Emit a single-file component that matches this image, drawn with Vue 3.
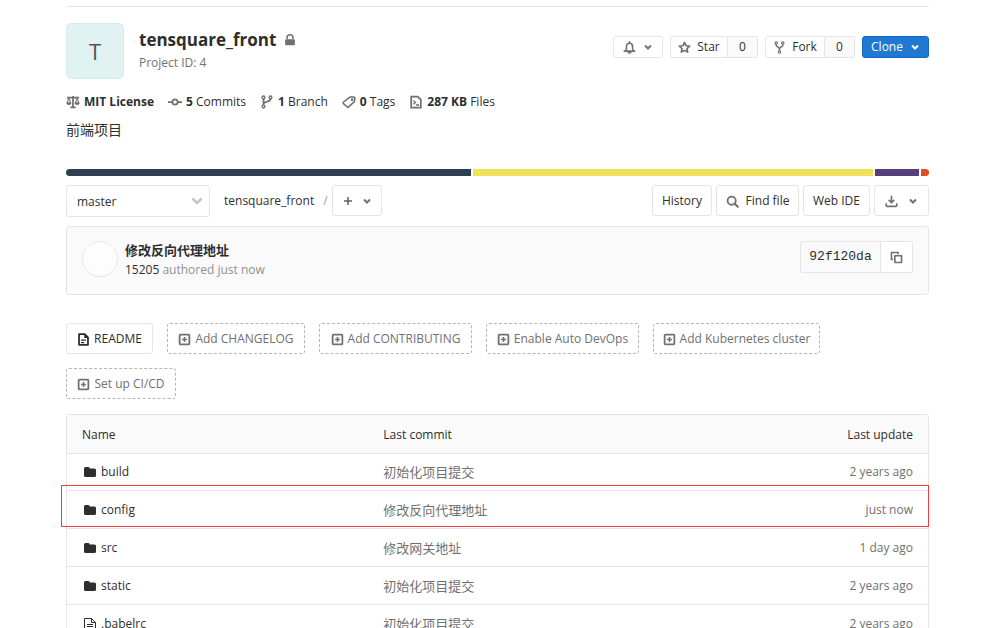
<script setup>
import { ref } from 'vue'

const branch = ref('master')

const stats = [
  { icon: 'scale', value: 'MIT License', label: '' },
  { icon: 'commit', value: '5', label: 'Commits' },
  { icon: 'branch', value: '1', label: 'Branch' },
  { icon: 'tag', value: '0', label: 'Tags' },
  { icon: 'disk', value: '287 KB', label: 'Files' }
]

const languages = [
  { name: 'Vue', share: 405, color: '#2c3e50' },
  { name: 'JavaScript', share: 401, color: '#f1e05a' },
  { name: 'CSS', share: 44, color: '#563d7c' },
  { name: 'HTML', share: 8, color: '#e34c26' }
]

const shortcuts = [
  { label: 'README', exists: true, size: 'w-readme' },
  { label: 'Add CHANGELOG', size: 'w-changelog' },
  { label: 'Add CONTRIBUTING', size: 'w-contributing' },
  { label: 'Enable Auto DevOps', size: 'w-contributing' },
  { label: 'Add Kubernetes cluster', size: 'w-cluster' },
  { label: 'Set up CI/CD', size: 'w-ci' }
]

const files = [
  { name: 'build', folder: true, commit: '初始化项目提交', updated: '2 years ago' },
  { name: 'config', folder: true, commit: '修改反向代理地址', updated: 'just now', marked: true },
  { name: 'src', folder: true, commit: '修改网关地址', updated: '1 day ago' },
  { name: 'static', folder: true, commit: '初始化项目提交', updated: '2 years ago' },
  { name: '.babelrc', folder: false, commit: '初始化项目提交', updated: '2 years ago' }
]
</script>

<template>
  <main class="page">
    <header class="project">
      <div class="avatar">T</div>
      <div class="heading">
        <h1>
          tensquare_front
          <svg class="lock" viewBox="0 0 16 16" aria-hidden="true">
            <path d="M4 7V5a4 4 0 0 1 8 0v2" fill="none" stroke="currentColor" stroke-width="2" />
            <rect x="1.5" y="7" width="13" height="8" rx="1.5" fill="currentColor" />
          </svg>
        </h1>
        <p>Project ID: 4</p>
      </div>
      <div class="actions">
        <button class="btn small bell" type="button" aria-label="Notification setting">
          <svg class="icon" viewBox="0 0 16 16"><path d="M1.500 12.500h13M3.500 12c.8-1.500.8-3 .8-5.500a3.700 3.700 0 0 1 7.400 0c0 2.500 0 4 .8 5.500M6.500 14.500h3M8 1v1.500" fill="none" stroke="currentColor" stroke-width="2" stroke-linecap="round" /></svg>
          <svg class="chevron" viewBox="0 0 10 10"><path d="M2 3.500l3 3 3-3" /></svg>
        </button>
        <div class="group">
          <button class="btn small star" type="button">
            <svg class="icon" viewBox="0 0 16 16"><path d="M8 1.800l1.900 4 4.400.5-3.200 3 .8 4.400L8 11.500l-3.900 2.200.8-4.400-3.200-3 4.400-.5z" fill="none" stroke="currentColor" stroke-width="2" stroke-linejoin="round" /></svg>
            Star
          </button>
          <a class="btn small count" href="#">0</a>
        </div>
        <div class="group">
          <button class="btn small fork" type="button">
            <svg class="icon" viewBox="0 0 16 16"><g fill="none" stroke="currentColor" stroke-width="1.500"><circle cx="4" cy="2.500" r="1.500" /><circle cx="12" cy="2.500" r="1.500" /><circle cx="8" cy="13.500" r="1.500" /><path d="M4 4v1.500c0 1.500 4 2 4 4V12M12 4v1.500c0 1.500-4 2-4 4" stroke-width="2" /></g></svg>
            Fork
          </button>
          <a class="btn small count" href="#">0</a>
        </div>
        <button class="btn small clone" type="button">
          Clone
          <svg class="chevron" viewBox="0 0 10 10"><path d="M2 3.500l3 3 3-3" /></svg>
        </button>
      </div>
    </header>

    <nav class="stats" aria-label="Project statistics">
      <a v-for="s in stats" :key="s.icon" href="#">
        <svg class="icon" viewBox="0 0 16 16" aria-hidden="true">
          <g fill="none" stroke="currentColor" stroke-width="1.600">
            <template v-if="s.icon === 'scale'">
              <path d="M8 1v13M5 14h6M1 3h14" stroke-width="2" />
              <path d="M3.300 3.500L1.300 9h4zM12.700 3.500l-2 5.500h4z" stroke-width="1.200" />
              <path d="M.5 9h5.600a2.800 2.300 0 0 1-5.600 0zM9.900 9h5.600a2.800 2.300 0 0 1-5.600 0z" fill="currentColor" stroke="none" />
            </template>
            <template v-else-if="s.icon === 'commit'">
              <circle cx="8" cy="8" r="3" stroke-width="2" />
              <path d="M0 8h5M11 8h5" stroke-width="2" />
            </template>
            <template v-else-if="s.icon === 'branch'">
              <circle cx="4" cy="2.800" r="1.600" /><circle cx="4" cy="13.200" r="1.600" /><circle cx="12" cy="2.800" r="1.600" />
              <path d="M4 4.500v7M12 4.500c0 4-8 2.500-8 6" stroke-width="2" />
            </template>
            <template v-else-if="s.icon === 'tag'">
              <path d="M9 2.300h4.500a1.200 1.200 0 0 1 1.200 1.200l-.5 4-6.700 6a1.300 1.300 0 0 1-1.900-.1L1.700 9.800a1.300 1.300 0 0 1 .1-1.800z" stroke-width="1.800" stroke-linejoin="round" />
              <circle cx="11.500" cy="5.300" r=".7" />
            </template>
            <template v-else>
              <path d="M2.500 1.800h7.500l3.500 3.500v9h-11z" stroke-width="2" />
              <path d="M5 6.500l2.300 2L5 10.500M8 11.500h3.500" />
            </template>
          </g>
        </svg>
        <strong>{{ s.value }}</strong><span v-if="s.label">&nbsp;{{ s.label }}</span>
      </a>
    </nav>

    <p class="description">前端项目</p>

    <div class="languages" role="img" aria-label="Repository languages">
      <span v-for="l in languages" :key="l.name" :style="{ flexGrow: l.share, background: l.color }"></span>
    </div>

    <div class="toolbar">
      <div class="select">
        <select v-model="branch" aria-label="Switch branch">
          <option>master</option>
        </select>
        <svg class="select-arrow" viewBox="0 0 12 12" aria-hidden="true"><path d="M1.500 3.500L6 8l4.500-4.500" fill="none" stroke="currentColor" stroke-width="2.500" /></svg>
      </div>
      <nav class="breadcrumb" aria-label="Breadcrumb"><a href="#">tensquare_front</a><span>/</span></nav>
      <button class="btn add" type="button" aria-label="Add to tree">
        <svg class="plus" viewBox="0 0 10 10"><path d="M5 1v8M1 5h8" fill="none" stroke="currentColor" stroke-width="1.500" /></svg>
        <svg class="chevron" viewBox="0 0 10 10"><path d="M2 3.500l3 3 3-3" /></svg>
      </button>
      <div class="tools">
        <a class="btn history" href="#">History</a>
        <a class="btn find" href="#">
          <svg class="icon" viewBox="0 0 16 16"><circle cx="7" cy="7" r="5" fill="none" stroke="currentColor" stroke-width="2.200" /><path d="M10.500 10.500l4 4" stroke="currentColor" stroke-width="2.500" stroke-linecap="round" /></svg>
          Find file
        </a>
        <a class="btn ide" href="#">Web IDE</a>
        <button class="btn download" type="button" aria-label="Download">
          <svg class="icon" viewBox="0 0 16 16"><path d="M8 1v8M4.500 6L8 9.500 11.500 6M1.500 10v3a1 1 0 0 0 1 1h11a1 1 0 0 0 1-1v-3" fill="none" stroke="currentColor" stroke-width="2" /></svg>
          <svg class="chevron" viewBox="0 0 10 10"><path d="M2 3.500l3 3 3-3" /></svg>
        </button>
      </div>
    </div>

    <section class="commit">
      <div class="author-avatar"></div>
      <div class="commit-text">
        <a class="commit-title" href="#">修改反向代理地址</a>
        <p><a href="#">15205</a> authored just now</p>
      </div>
      <div class="group sha">
        <span class="sha-value">92f120da</span>
        <button class="btn copy" type="button" aria-label="Copy commit SHA">
          <svg class="icon" viewBox="0 0 16 16"><path d="M4 10.500H1.800V1.800H10V4M6 5.800h8.200v8.400H6z" fill="none" stroke="currentColor" stroke-width="2" stroke-linejoin="round" /></svg>
        </button>
      </div>
    </section>

    <nav class="shortcuts" aria-label="Project shortcuts">
      <a v-for="s in shortcuts" :key="s.label" class="btn shortcut" :class="[s.size, { missing: !s.exists }]" href="#">
        <svg v-if="s.exists" class="icon" viewBox="0 0 16 16"><path d="M2.500 1.500h7L13.500 5.500v9h-11z" fill="none" stroke="currentColor" stroke-width="2.200" stroke-linejoin="round" /><path d="M9 1v5h5zM5 8h6v1.500H5zM5 11h4v1.500H5z" fill="currentColor" /></svg>
        <svg v-else class="icon" viewBox="0 0 16 16"><rect x="2" y="2" width="12" height="12" rx="1" fill="none" stroke="currentColor" stroke-width="2.200" /><path d="M8 5v6M5 8h6" stroke="currentColor" stroke-width="2" /></svg>
        {{ s.label }}
      </a>
    </nav>

    <table class="files">
      <thead>
        <tr><th class="col-name">Name</th><th>Last commit</th><th class="col-update">Last update</th></tr>
      </thead>
      <tbody>
        <tr v-for="f in files" :key="f.name" :class="{ marked: f.marked }">
          <td>
            <a class="file" href="#">
              <svg v-if="f.folder" class="file-icon" viewBox="0 0 14 14" aria-hidden="true"><path d="M1 3.500A1.500 1.500 0 0 1 2.500 2h2.800A1.500 1.500 0 0 1 6.800 3.500h4.700A1.500 1.500 0 0 1 13 5v5.500a1.500 1.500 0 0 1-1.500 1.500h-9A1.500 1.500 0 0 1 1 10.500z" fill="currentColor" /></svg>
              <svg v-else class="file-icon" viewBox="0 0 14 14" aria-hidden="true"><path d="M1.500 1.500h7l4 4v8h-11zM8.500 1.500v4h4M4 7.500h6M4 9.500h6M4 11.500h6" fill="none" stroke="currentColor" /></svg>
              {{ f.name }}
            </a>
          </td>
          <td class="cjk">{{ f.commit }}</td>
          <td class="col-update">{{ f.updated }}</td>
        </tr>
      </tbody>
    </table>
  </main>
</template>

<style>
body {
  background: #fff;
}
</style>

<style scoped>
.page,
.page * {
  box-sizing: border-box;
}
.page {
  padding: 6px 79px 0 66px;
  color: #2e2e2e;
  font: 12px/18px "Open Sans", "Noto Sans", "Noto Sans CJK SC", sans-serif;
}
a {
  color: inherit;
  text-decoration: none;
}
h1,
p {
  margin: 0;
}
svg {
  display: block;
  flex: none;
}
.icon {
  width: 13px;
  height: 13px;
  color: #707070;
}
.chevron {
  width: 10px;
  height: 10px;
  fill: none;
  stroke: #707070;
  stroke-width: 2;
}
.btn {
  display: inline-flex;
  align-items: center;
  justify-content: center;
  gap: 7px;
  height: 31px;
  padding: 1px 0 0;
  border: 1px solid #e5e5e5;
  border-radius: 3px;
  background: #fff;
  color: #2e2e2e;
  font: inherit;
  white-space: nowrap;
}
.small {
  height: 22px;
  padding: 0;
}
.group {
  display: flex;
}
.group > :first-child {
  border-radius: 3px 0 0 3px;
}
.group > :last-child {
  border-left: 0;
  border-radius: 0 3px 3px 0;
}

.project {
  display: flex;
  padding-top: 16px;
  border-top: 1px solid #e5e5e5;
}
.avatar {
  display: flex;
  align-items: center;
  justify-content: center;
  width: 58px;
  height: 56px;
  margin-right: 15px;
  border: 1px solid #d8ecea;
  border-radius: 5px;
  background: #e0f2f1;
  color: #555;
  font-size: 22px;
}
.heading {
  padding-top: 5px;
}
h1 {
  display: flex;
  align-items: center;
  gap: 8px;
  font-size: 17px;
  font-weight: 700;
  line-height: 24px;
}
.heading p {
  margin-top: 2px;
  color: #707070;
}
.lock {
  width: 12px;
  height: 12px;
  color: #707070;
}
.actions {
  display: flex;
  gap: 7px;
  margin: 13px 0 0 auto;
}
.bell {
  width: 50px;
}
.star {
  width: 58px;
  gap: 6px;
}
.fork {
  width: 60px;
  gap: 6px;
}
.count {
  width: 30px;
  background: #fafafa;
}
.clone {
  width: 67px;
  border-color: #1068bf;
  background: #1f78d1;
  color: #fff;
}
.clone .chevron {
  stroke: #fff;
}

.stats {
  display: flex;
  gap: 14px;
  margin-top: 14px;
}
.stats a {
  display: flex;
  align-items: center;
}
.stats .icon {
  width: 14px;
  height: 14px;
  margin-right: 4px;
}
.stats strong {
  font-weight: 700;
}
.description {
  margin-top: 9px;
  font-size: 14px;
  line-height: 20px;
}
.languages {
  display: flex;
  gap: 2px;
  height: 7px;
  margin-top: 29px;
  overflow: hidden;
  border-radius: 4px;
}
.languages span {
  flex-basis: 0;
}

.toolbar {
  display: flex;
  margin-top: 9px;
}
.select {
  position: relative;
  width: 144px;
}
.select select {
  width: 100%;
  height: 32px;
  padding: 1px 10px 0;
  border: 1px solid #e5e5e5;
  border-radius: 3px;
  background: #fff;
  color: #2e2e2e;
  font: inherit;
  appearance: none;
}
.select-arrow {
  position: absolute;
  top: 10px;
  right: 7px;
  width: 12px;
  height: 12px;
  color: #c4c4c4;
  pointer-events: none;
}
.breadcrumb {
  display: flex;
  gap: 9px;
  width: 122px;
  padding-left: 14px;
  line-height: 31px;
}
.breadcrumb span {
  color: #a0a0a0;
}
.add {
  width: 50px;
  gap: 9px;
}
.plus {
  width: 10px;
  height: 10px;
  color: #606060;
}
.tools {
  display: flex;
  gap: 4px;
  margin-left: auto;
}
.history {
  width: 60px;
}
.find {
  width: 83px;
}
.ide {
  width: 67px;
}
.download {
  width: 55px;
  gap: 10px;
}

.commit {
  display: flex;
  align-items: flex-start;
  height: 69px;
  margin-top: 9px;
  padding: 14px 15px;
  border: 1px solid #e5e5e5;
  border-radius: 3px;
  background: #fafafa;
}
.author-avatar {
  width: 36px;
  height: 36px;
  margin-right: 7px;
  border: 1px solid #e5e5e5;
  border-radius: 50%;
  background: #fdfdfd;
}
.commit-text p {
  margin-top: 2px;
  color: #919191;
}
.commit-text p a {
  color: #2e2e2e;
}
.commit-title {
  display: block;
  font-size: 13px;
  font-weight: 600;
}
.sha {
  margin-left: auto;
}
.sha-value {
  width: 81px;
  height: 32px;
  border: 1px solid #e5e5e5;
  font: 13px/30px "Liberation Mono", monospace;
  text-align: center;
}
.copy {
  width: 32px;
  height: 32px;
}

.shortcuts {
  display: flex;
  flex-wrap: wrap;
  gap: 14px;
  margin-top: 28px;
}
.shortcut {
  gap: 4px;
}
.shortcut .icon {
  color: #2e2e2e;
}
.missing {
  border: 1px dashed #b5b5b5;
  color: #707070;
}
.missing .icon {
  color: #707070;
}
.w-readme {
  width: 87px;
}
.w-changelog {
  width: 138px;
}
.w-contributing {
  width: 153px;
}
.w-cluster {
  width: 167px;
}
.w-ci {
  width: 110px;
}

.files {
  width: 100%;
  margin-top: 15px;
  border: 1px solid #e5e5e5;
  border-radius: 3px;
  border-spacing: 0;
  table-layout: fixed;
}
th,
td {
  height: 38px;
  padding: 0 15px;
  border-bottom: 1px solid #e5e5e5;
  text-align: left;
}
tbody tr:first-child td {
  height: 37px;
}
th {
  height: 39px;
  padding-top: 1px;
  background: #fafafa;
  font-weight: 400;
}
td {
  color: #707070;
}
.col-name {
  width: 35%;
}
.col-update {
  text-align: right;
}
.cjk {
  font-size: 13px;
}
.file {
  display: flex;
  align-items: center;
  gap: 4px;
  padding-left: 1px;
  color: #2e2e2e;
}
.file-icon {
  width: 14px;
  height: 14px;
}
.marked {
  position: relative;
}
.marked td:first-child::before {
  content: "";
  position: absolute;
  z-index: 1;
  top: -6px;
  right: -1px;
  bottom: 2px;
  left: -6px;
  border: 1px solid #f03c3c;
  pointer-events: none;
}
</style>
